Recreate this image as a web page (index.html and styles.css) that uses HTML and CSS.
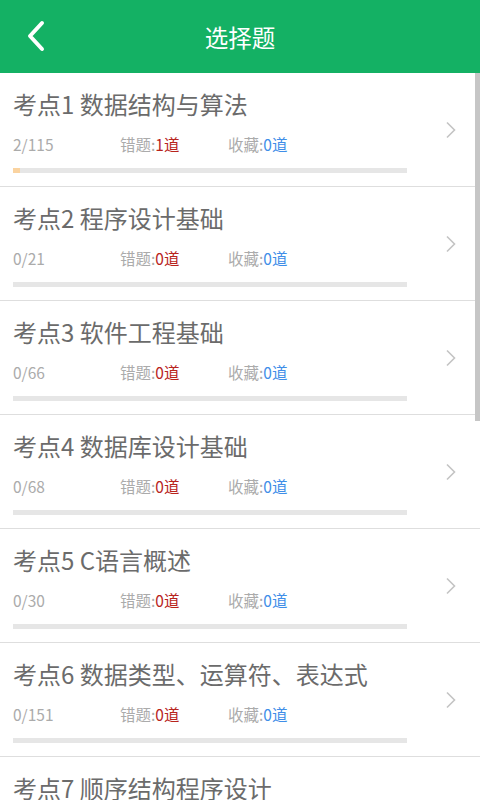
FILE: index.html
```html
<!DOCTYPE html>
<html lang="zh">
<head>
<meta charset="utf-8">
<link rel="stylesheet" href="styles.css">
</head>
<body>
<header class="bar">
  <svg class="back" width="22" height="34" viewBox="0 0 22 34"><path d="M17 4 L5 17 L17 30" fill="none" stroke="#fff" stroke-width="4" stroke-linecap="round" stroke-linejoin="round"/></svg>
  <h1 class="title">选择题</h1>
</header>
<main class="list">
  <div class="row">
    <div class="info">
      <div class="name">考点1 数据结构与算法</div>
      <div class="stats"><span class="count">2/115</span><span class="err">错题:<b class="red">1道</b></span><span class="fav">收藏:<b class="blue">0道</b></span></div>
      <div class="track"><div class="fill" style="width:6.9px"></div></div>
    </div>
    <svg class="chev" width="12" height="18" viewBox="0 0 12 18"><path d="M2 1.5 L9.5 9 L2 16.5" fill="none" stroke="#c4c4c4" stroke-width="1.6"/></svg>
  </div>
  <div class="row">
    <div class="info">
      <div class="name">考点2 程序设计基础</div>
      <div class="stats"><span class="count">0/21</span><span class="err">错题:<b class="red">0道</b></span><span class="fav">收藏:<b class="blue">0道</b></span></div>
      <div class="track"></div>
    </div>
    <svg class="chev" width="12" height="18" viewBox="0 0 12 18"><path d="M2 1.5 L9.5 9 L2 16.5" fill="none" stroke="#c4c4c4" stroke-width="1.6"/></svg>
  </div>
  <div class="row">
    <div class="info">
      <div class="name">考点3 软件工程基础</div>
      <div class="stats"><span class="count">0/66</span><span class="err">错题:<b class="red">0道</b></span><span class="fav">收藏:<b class="blue">0道</b></span></div>
      <div class="track"></div>
    </div>
    <svg class="chev" width="12" height="18" viewBox="0 0 12 18"><path d="M2 1.5 L9.5 9 L2 16.5" fill="none" stroke="#c4c4c4" stroke-width="1.6"/></svg>
  </div>
  <div class="row">
    <div class="info">
      <div class="name">考点4 数据库设计基础</div>
      <div class="stats"><span class="count">0/68</span><span class="err">错题:<b class="red">0道</b></span><span class="fav">收藏:<b class="blue">0道</b></span></div>
      <div class="track"></div>
    </div>
    <svg class="chev" width="12" height="18" viewBox="0 0 12 18"><path d="M2 1.5 L9.5 9 L2 16.5" fill="none" stroke="#c4c4c4" stroke-width="1.6"/></svg>
  </div>
  <div class="row">
    <div class="info">
      <div class="name">考点5 C语言概述</div>
      <div class="stats"><span class="count">0/30</span><span class="err">错题:<b class="red">0道</b></span><span class="fav">收藏:<b class="blue">0道</b></span></div>
      <div class="track"></div>
    </div>
    <svg class="chev" width="12" height="18" viewBox="0 0 12 18"><path d="M2 1.5 L9.5 9 L2 16.5" fill="none" stroke="#c4c4c4" stroke-width="1.6"/></svg>
  </div>
  <div class="row">
    <div class="info">
      <div class="name">考点6 数据类型、运算符、表达式</div>
      <div class="stats"><span class="count">0/151</span><span class="err">错题:<b class="red">0道</b></span><span class="fav">收藏:<b class="blue">0道</b></span></div>
      <div class="track"></div>
    </div>
    <svg class="chev" width="12" height="18" viewBox="0 0 12 18"><path d="M2 1.5 L9.5 9 L2 16.5" fill="none" stroke="#c4c4c4" stroke-width="1.6"/></svg>
  </div>
  <div class="row">
    <div class="info">
      <div class="name">考点7 顺序结构程序设计</div>
    </div>
  </div>
</main>
<div class="scroll"></div>
</body>
</html>
```
FILE: styles.css
```css
html, body {
  margin: 0;
  padding: 0;
  background: #fff;
  height: 800px;
  overflow: hidden;
  font-family: "Noto Sans CJK SC", "Noto Sans", sans-serif;
}
.bar {
  height: 73px;
  background: #14b164;
  display: flex;
  align-items: center;
  justify-content: center;
  position: relative;
}
.back {
  position: absolute;
  left: 25px;
  top: 19px;
}
.title {
  margin: 0;
  font-size: 23.5px;
  font-weight: 400;
  color: #fff;
  line-height: 30px;
}
.list {
  display: flex;
  flex-direction: column;
}
.row {
  display: flex;
  align-items: center;
  height: 113px;
  border-bottom: 1px solid #dedede;
  padding: 0 13px;
  box-sizing: content-box;
  flex-shrink: 0;
}
.row:last-child {
  align-items: flex-start;
}
.info {
  width: 394px;
  display: flex;
  flex-direction: column;
  padding-top: 16px;
  padding-bottom: 13px;
}
.name {
  font-size: 24px;
  line-height: 30px;
  color: #6b6b6b;
  white-space: nowrap;
}
.stats {
  margin-top: 15px;
  display: flex;
  font-size: 15.5px;
  line-height: 20px;
  color: #ababab;
}
.stats b { font-weight: 400; }
.count { width: 107px; }
.err { width: 108px; }
.red { color: #b8241c; }
.blue { color: #3f8ee8; }
.track {
  margin-top: 14px;
  height: 5px;
  background: #e6e6e6;
}
.fill {
  height: 5px;
  background: #fad3a0;
}
.chev {
  margin-left: 38px;
}
.scroll {
  position: absolute;
  right: 0;
  top: 73px;
  width: 5px;
  height: 348px;
  background: #c6c6c6;
}
```
